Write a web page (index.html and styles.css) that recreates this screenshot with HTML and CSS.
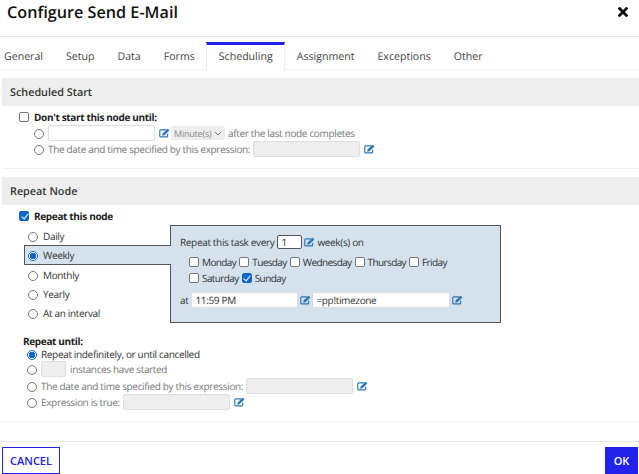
FILE: index.html
```html
<!DOCTYPE html>
<html lang="en">
<head>
    <meta charset="UTF-8">
    <title>Configure Send E-Mail</title>
    <link rel="stylesheet" href="styles.css">
</head>
<body>
    <svg class="defs" width="0" height="0">
        <symbol id="edit" viewBox="0 0 14 12">
            <path d="M9.5 2H2.2C1.5 2 1 2.5 1 3.2v6.6C1 10.5 1.5 11 2.2 11h7.6c.7 0 1.2-.5 1.2-1.2V7" fill="none" stroke="currentColor" stroke-width="1.5"/>
            <path d="M4.5 6.6 10.6.8c.3-.3.6-.3.9 0l1.4 1.3c.3.3.3.6 0 .9L7 8.8l-3 .6z" fill="currentColor"/>
        </symbol>
    </svg>
    <div class="dialog">
        <header class="title-bar">
            <h1>Configure Send E-Mail</h1>
            <svg class="close" viewBox="0 0 10 10" width="10" height="10"><path d="M1.6 1.6l6.8 6.8M8.4 1.6 1.6 8.4" stroke="#111" stroke-width="2.8" stroke-linecap="square"/></svg>
        </header>
        <nav class="tabs">
            <a>General</a>
            <a>Setup</a>
            <a>Data</a>
            <a>Forms</a>
            <a class="active">Scheduling</a>
            <a>Assignment</a>
            <a>Exceptions</a>
            <a>Other</a>
        </nav>

        <section class="panel start-panel">
            <h2>Scheduled Start</h2>
            <label class="check-title"><input type="checkbox">Don't start this node until:</label>
            <div class="option-row muted">
                <input type="radio" name="start">
                <span class="field white w-107"></span>
                <svg class="edit"><use href="#edit"/></svg>
                <span class="unit">Minute(s)<svg viewBox="0 0 8 5" width="8" height="5"><path d="M1 1l3 3 3-3" fill="none" stroke="#777" stroke-width="1"/></svg></span>
                <span>after the last node completes</span>
            </div>
            <div class="option-row muted">
                <input type="radio" name="start">
                <span>The date and time specified by this expression:</span>
                <span class="field w-107"></span>
                <svg class="edit"><use href="#edit"/></svg>
            </div>
        </section>

        <section class="panel repeat-panel">
            <h2>Repeat Node</h2>
            <label class="check-title"><input type="checkbox" checked>Repeat this node</label>
            <div class="repeat-body">
                <div class="freq-list">
                    <label><input type="radio" name="freq">Daily</label>
                    <label class="selected"><input type="radio" name="freq" checked>Weekly</label>
                    <label><input type="radio" name="freq">Monthly</label>
                    <label><input type="radio" name="freq">Yearly</label>
                    <label><input type="radio" name="freq">At an interval</label>
                </div>
                <div class="freq-detail">
                    <div class="every-row">
                        <span class="lead">Repeat this task every</span>
                        <span class="field white dark w-25">1</span>
                        <svg class="edit"><use href="#edit"/></svg>
                        <span>week(s) on</span>
                    </div>
                    <div class="days">
                        <label><input type="checkbox">Monday</label>
                        <label><input type="checkbox">Tuesday</label>
                        <label><input type="checkbox">Wednesday</label>
                        <label><input type="checkbox">Thursday</label>
                        <label><input type="checkbox">Friday</label>
                        <label><input type="checkbox">Saturday</label>
                        <label><input type="checkbox" checked>Sunday</label>
                    </div>
                    <div class="at-row">
                        <span class="lead">at</span>
                        <span class="field white w-107">11:59 PM</span>
                        <svg class="edit"><use href="#edit"/></svg>
                        <span class="field white w-138">=pp!timezone</span>
                        <svg class="edit"><use href="#edit"/></svg>
                    </div>
                </div>
            </div>
            <div class="until">
                <h3>Repeat until:</h3>
                <div class="option-row"><input type="radio" name="until" checked><span>Repeat indefinitely, or until cancelled</span></div>
                <div class="option-row muted"><input type="radio" name="until"><span class="field w-25"></span><span>instances have started</span></div>
                <div class="option-row muted spaced"><input type="radio" name="until"><span>The date and time specified by this expression:</span><span class="field w-107"></span><svg class="edit"><use href="#edit"/></svg></div>
                <div class="option-row muted"><input type="radio" name="until"><span>Expression is true:</span><span class="field w-107"></span><svg class="edit"><use href="#edit"/></svg></div>
            </div>
        </section>

        <footer class="actions">
            <button class="btn-cancel">CANCEL</button>
            <button class="btn-ok">OK</button>
        </footer>
    </div>
</body>
</html>
```

FILE: styles.css
```css
* {
    box-sizing: border-box;
}
body {
    margin: 0;
    background-color: #fff;
    font-family: "Open Sans", Arial, sans-serif;
    font-size: 10px;
    letter-spacing: -0.34px;
    text-rendering: geometricPrecision;
    color: #333;
    overflow: hidden;
}
.defs {
    display: block;
}
.dialog {
    width: 639px;
    height: 474px;
    display: flex;
    flex-direction: column;
}
.title-bar {
    height: 37px;
    padding: 0 11px 0 7px;
    display: flex;
    justify-content: space-between;
    align-items: center;
    border-bottom: 1px solid #e6e6e6;
}
.title-bar h1 {
    margin: 0 0 12px;
    font-size: 16.2px;
    font-weight: 600;
    letter-spacing: 0;
    color: #111;
}
.close {
    margin-bottom: 12px;
}
.tabs {
    height: 33px;
    padding-top: 5px;
    display: flex;
    border-bottom: 1px solid #f3f3f3;
}
.tabs a {
    padding: 5px 11.5px 0;
    font-size: 10.6px;
    letter-spacing: 0;
    color: #444;
    line-height: 20px;
}
.tabs a:first-child {
    padding-left: 4px;
}
.tabs a.active {
    border-top: 3px solid #2222ee;
    border-left: 1px solid #eee;
    border-right: 1px solid #eee;
    padding-top: 2px;
    height: 29px;
    background: #fff;
}
.panel {
    margin: 8px 0 0 2px;
    border-bottom: 1px solid #f1f1f1;
}
.start-panel {
    height: 91px;
}
.repeat-panel {
    height: 245px;
}
.panel h2 {
    margin: 0;
    height: 28px;
    padding-left: 8px;
    background-color: #eee;
    font-size: 10.8px;
    font-weight: 600;
    letter-spacing: 0;
    line-height: 30px;
    color: #333;
}
.check-title {
    margin: 3px 0 2px 17px;
    height: 15px;
    display: flex;
    align-items: center;
    font-weight: 700;
    color: #222;
}
.start-panel .check-title {
    margin-bottom: 1px;
}
input {
    appearance: none;
    margin: 0;
    flex: none;
    background: #fff;
}
input[type="checkbox"] {
    width: 10px;
    height: 10px;
    margin-right: 5px;
    border: 1px solid #777;
    border-radius: 2px;
}
input[type="checkbox"]:checked {
    background-color: #1167c8;
    border-color: #1167c8;
}
input[type="checkbox"]:checked::after {
    content: "";
    display: block;
    width: 3px;
    height: 6px;
    margin: 0 0 0 2.5px;
    border: solid #fff;
    border-width: 0 1.5px 1.5px 0;
    transform: rotate(40deg);
}
input[type="radio"] {
    width: 10px;
    height: 10px;
    margin-top: 2px;
    border: 1px solid #777;
    border-radius: 50%;
}
input[type="radio"]:checked {
    border-color: #1167c8;
    background: radial-gradient(circle, #1167c8 0 3px, #fff 3.5px);
}
.option-row {
    margin-left: 32px;
    height: 16px;
    display: flex;
    align-items: center;
    gap: 4px;
    white-space: nowrap;
}
.option-row.muted {
    color: #777;
}
.option-row > span + .field {
    margin-left: -1px;
}
.field {
    display: block;
    height: 16px;
    padding: 0 3px;
    background-color: #eee;
    border: 1px solid #ddd;
    border-radius: 2px;
    line-height: 14px;
    color: #333;
}
.field.white {
    background-color: #fff;
}
.field.dark {
    border-color: #555;
}
.w-25 {
    width: 25px;
}
.w-107 {
    width: 107px;
}
.w-138 {
    width: 138px;
}
.edit {
    width: 11px;
    height: 10px;
    color: #2f78b5;
    flex: none;
}
.unit {
    width: 54px;
    height: 14px;
    margin: 0 -1px 0 -3px;
    padding: 0 3px;
    display: flex;
    align-items: center;
    justify-content: space-between;
    background-color: #eee;
    border-radius: 2px;
    font-size: 9px;
    letter-spacing: -0.2px;
    color: #888;
}
.repeat-body {
    display: flex;
    align-items: flex-start;
}
.freq-list {
    margin: 1px 0 0 22px;
    width: 147px;
    position: relative;
    z-index: 1;
}
.freq-list label {
    height: 19.2px;
    padding-left: 4px;
    display: flex;
    align-items: center;
    gap: 5px;
}
.freq-list label.selected {
    height: 20px;
    background-color: #d5e2ee;
    border: 1px solid #555;
    border-right: none;
    padding-left: 3px;
}
.freq-detail {
    margin: 0 0 0 -1px;
    width: 331px;
    height: 98px;
    padding: 8px 9px;
    background-color: #d5e2ee;
    border: 1px solid #555;
}
.every-row {
    display: flex;
    align-items: center;
    gap: 2px;
    height: 15px;
}
.every-row .field {
    height: 14px;
    line-height: 12px;
}
.lead {
    margin-right: 1px;
}
.days {
    margin: 6px 0 0 9px;
    display: flex;
    flex-wrap: wrap;
    width: 285px;
    column-gap: 3px;
    row-gap: 1px;
    letter-spacing: -0.6px;
}
.days label {
    height: 14.5px;
    display: flex;
    align-items: center;
}
.days input {
    margin-right: 3px;
}
.at-row {
    margin-top: 7px;
    display: flex;
    align-items: center;
    gap: 2px;
}
.at-row .edit + .field {
    margin-left: -1px;
}
.until {
    margin-top: 13px;
}
.until h3 {
    margin: 0 0 0 21px;
    font-size: 10px;
    font-weight: 700;
    color: #222;
    line-height: 11px;
}
.until .option-row {
    margin-left: 25px;
}
.until h3 + .option-row {
    height: 14px;
}
.until .spaced {
    margin-top: 1px;
}
.actions {
    margin-top: 19px;
    flex: 1;
    display: flex;
    justify-content: space-between;
    align-items: flex-end;
    border-top: 1px solid #e6e6e6;
    padding: 0 0 0 2px;
}
.actions button {
    height: 27px;
    font-family: inherit;
    font-size: 11px;
    font-weight: 600;
    letter-spacing: 0;
    cursor: pointer;
}
.btn-cancel {
    width: 58px;
    background-color: #fff;
    color: #2222ee;
    border: 1px solid #2222ee;
}
.btn-ok {
    width: 33px;
    margin-right: 1px;
    background-color: #2222ee;
    color: #fff;
    border: none;
}
```
